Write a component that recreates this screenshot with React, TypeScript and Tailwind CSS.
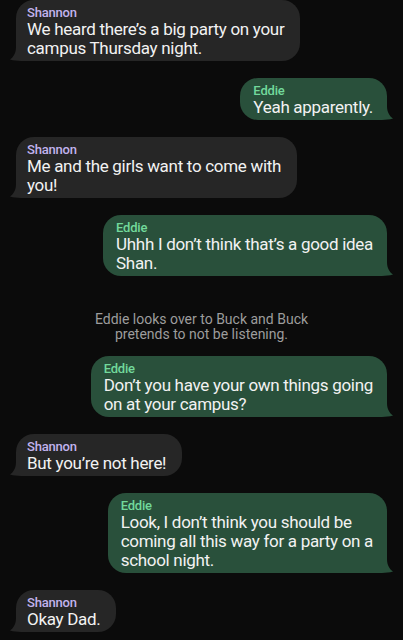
import * as React from "react";

type Msg =
  | { kind: "msg"; from: "Shannon" | "Eddie"; lines: string[] }
  | { kind: "note"; lines: string[] };

const THREAD: Msg[] = [
  { kind: "msg", from: "Shannon", lines: ["We heard there’s a big party on your", "campus Thursday night."] },
  { kind: "msg", from: "Eddie", lines: ["Yeah apparently."] },
  { kind: "msg", from: "Shannon", lines: ["Me and the girls want to come with", "you!"] },
  { kind: "msg", from: "Eddie", lines: ["Uhhh I don’t think that’s a good idea", "Shan."] },
  { kind: "note", lines: ["Eddie looks over to Buck and Buck", "pretends to not be listening."] },
  { kind: "msg", from: "Eddie", lines: ["Don’t you have your own things going", "on at your campus?"] },
  { kind: "msg", from: "Shannon", lines: ["But you’re not here!"] },
  { kind: "msg", from: "Eddie", lines: ["Look, I don’t think you should be", "coming all this way for a party on a", "school night."] },
  { kind: "msg", from: "Shannon", lines: ["Okay Dad."] },
];

function Tail({ mine }: { mine: boolean }) {
  return (
    <svg
      width="26"
      height="20"
      viewBox="0 0 26 20"
      className={mine ? "absolute bottom-0 right-[-6px] -scale-x-100" : "absolute bottom-0 left-[-6px]"}
    >
      <path
        d="M6 0 H26 V20 H11 C7 20 3.5 19.6 0 18.6 C3.5 16 6 12 6 6 Z"
        fill={mine ? "#29503b" : "#262626"}
      />
    </svg>
  );
}

function Bubble({ from, lines }: { from: "Shannon" | "Eddie"; lines: string[] }) {
  const mine = from === "Eddie";
  return (
    <div className={mine ? "self-end mr-4" : "self-start ml-4"}>
      <div className={`relative rounded-[18px] pt-[5px] pb-[3px] ${mine ? "bg-[#29503b] pr-[14px] pl-[13px]" : "bg-[#262626] pl-[11px] pr-4"}`}>
        <Tail mine={mine} />
        <div className="relative">
          <div className={`text-[13px] leading-[15px] font-medium tracking-[-0.2px] ${mine ? "text-[#72d99b]" : "text-[#c2b3ee]"}`}>{from}</div>
          {lines.map((l) => (
            <div key={l} className="whitespace-nowrap text-[17px] leading-[19px] tracking-[-0.3px] text-[#f2f2f2]">
              {l}
            </div>
          ))}
        </div>
      </div>
    </div>
  );
}

export default function App() {
  return (
    <div className="min-h-screen bg-[#0b0b0b] font-['Roboto','Noto_Sans',sans-serif] overflow-hidden">
      <div className="flex flex-col gap-[17px] w-[403px] h-[640px]">
        {THREAD.map((m, i) =>
          m.kind === "note" ? (
            <div key={i} className="mt-[19px] -mb-[3px] text-center text-[14px] leading-[15px] text-[#9d9d9d]">
              {m.lines.map((l) => (
                <div key={l}>{l}</div>
              ))}
            </div>
          ) : (
            <Bubble key={i} from={m.from} lines={m.lines} />
          )
        )}
      </div>
    </div>
  );
}
